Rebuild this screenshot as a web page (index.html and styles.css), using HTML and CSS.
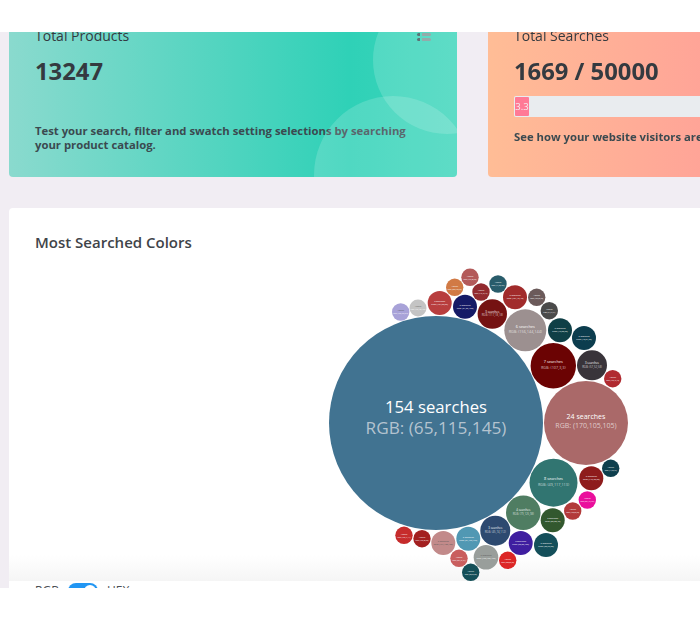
FILE: index.html
```html
<!DOCTYPE html>
<html lang="en">
<head>
<meta charset="utf-8">
<title>Dashboard</title>
<link rel="stylesheet" href="styles.css">
</head>
<body>
<header class="topbar"></header>
<main class="viewport">
  <div class="content">
    <section class="stats">
      <article class="stat stat-green">
        <h3 class="stat-label">Total Products</h3>
        <p class="stat-value">13247</p>
        <p class="stat-note stat-note-green">Test your search, filter and swatch setting selections by searching your product catalog.</p>
        <span class="stat-menu"><i></i><i></i></span>
        <span class="deco deco-a"></span>
        <span class="deco deco-b"></span>
      </article>
      <article class="stat stat-orange">
        <h3 class="stat-label">Total Searches</h3>
        <p class="stat-value">1669 / 50000</p>
        <div class="progress"><div class="progress-bar">3.3</div></div>
        <p class="stat-note nowrap">See how your website visitors are using your search</p>
      </article>
    </section>
    <section class="panel">
      <h2 class="panel-title">Most Searched Colors</h2>
      <div class="fade"></div>
      <svg class="bubbles" width="691" height="360" viewBox="0 0 691 360">
        <g transform="translate(-9,-266)">
          <g class="b"><circle cx="436" cy="423" r="107" fill="#417391"/><text class="t1" x="436" y="413">154 searches</text><text class="t2" x="436" y="434">RGB: (65,115,145)</text></g>
          <g class="b"><circle cx="586" cy="423" r="42" fill="#aa6969"/><text class="t3" x="586" y="419">24 searches</text><text class="t4" x="586" y="428">RGB: (170,105,105)</text></g>
          <g class="b"><circle cx="553.3" cy="365.7" r="22.7" fill="#6b0303"/><text class="t5" x="553.3" y="363">7 searches</text><text class="t6" x="553.3" y="369">RGB: (107,3,3)</text></g>
          <g class="b"><circle cx="553.5" cy="482.7" r="24" fill="#317571"/><text class="t5" x="553.5" y="480">8 searches</text><text class="t6" x="553.5" y="486">RGB: (49,117,113)</text></g>
          <g class="b"><circle cx="525.3" cy="330.3" r="21" fill="#9c9090"/><text class="t5" x="525.3" y="328">6 searches</text><text class="t6" x="525.3" y="333">RGB: (156,144,144)</text></g>
          <g class="b"><circle cx="523.3" cy="512.7" r="17.3" fill="#4f7d62"/><text class="t7" x="523.3" y="511">4 searches</text><text class="t8" x="523.3" y="515">RGB: (79,125,98)</text></g>
          <g class="b"><circle cx="495.3" cy="530.7" r="15" fill="#2d4a70"/><text class="t7" x="495.3" y="529">3 searches</text><text class="t8" x="495.3" y="533">RGB: (45,74,112)</text></g>
          <g class="b"><circle cx="592" cy="365.3" r="15" fill="#39343a"/><text class="t7" x="592" y="364">3 searches</text><text class="t8" x="592" y="368">RGB: (57,52,58)</text></g>
          <g class="b"><circle cx="492.3" cy="314" r="14.7" fill="#751212"/><text class="t7" x="492.3" y="313">3 searches</text><text class="t8" x="492.3" y="316">RGB: (117,18,18)</text></g>
          <g class="b"><circle cx="439.7" cy="303" r="12" fill="#b83e3e"/><text class="t9" x="439.7" y="302">2 searches</text><text class="t9" x="439.7" y="305">RGB: (184,62,62)</text></g>
          <g class="b"><circle cx="465" cy="306.7" r="12" fill="#151a66"/><text class="t9" x="465" y="306">2 searches</text><text class="t9" x="465" y="309">RGB: (21,26,102)</text></g>
          <g class="b"><circle cx="515" cy="297.3" r="12" fill="#a12b2b"/><text class="t9" x="515" y="296">2 searches</text><text class="t9" x="515" y="299">RGB: (161,43,43)</text></g>
          <g class="b"><circle cx="560" cy="330.3" r="12" fill="#0f3f46"/><text class="t9" x="560" y="329">2 searches</text><text class="t9" x="560" y="332">RGB: (15,63,70)</text></g>
          <g class="b"><circle cx="584" cy="338" r="12" fill="#0c3d4e"/><text class="t9" x="584" y="337">2 searches</text><text class="t9" x="584" y="340">RGB: (12,61,78)</text></g>
          <g class="b"><circle cx="591.3" cy="478.3" r="12" fill="#8e1c1c"/><text class="t9" x="591.3" y="477">2 searches</text><text class="t9" x="591.3" y="480">RGB: (142,28,28)</text></g>
          <g class="b"><circle cx="552.7" cy="520.3" r="12" fill="#32582e"/><text class="t9" x="552.7" y="519">2 searches</text><text class="t9" x="552.7" y="522">RGB: (50,88,46)</text></g>
          <g class="b"><circle cx="520.7" cy="543" r="12" fill="#3f1ea0"/><text class="t9" x="520.7" y="542">2 searches</text><text class="t9" x="520.7" y="545">RGB: (63,30,160)</text></g>
          <g class="b"><circle cx="546" cy="545" r="12" fill="#144f5a"/><text class="t9" x="546" y="544">2 searches</text><text class="t9" x="546" y="547">RGB: (20,79,90)</text></g>
          <g class="b"><circle cx="468.3" cy="538.7" r="12" fill="#5198b3"/><text class="t9" x="468.3" y="538">2 searches</text><text class="t9" x="468.3" y="541">RGB: (81,152,179)</text></g>
          <g class="b"><circle cx="443.3" cy="543" r="12" fill="#c28a8a"/><text class="t9 dk" x="443.3" y="542">2 searches</text><text class="t9 dk" x="443.3" y="545">RGB: (194,138,138)</text></g>
          <g class="b"><circle cx="486" cy="557.3" r="12.3" fill="#999e9b"/><text class="t9 dk" x="486" y="556">2 searches</text><text class="t9" x="486" y="559">RGB: (153,158,155)</text></g>
          <g class="b"><circle cx="400.7" cy="312" r="8.7" fill="#a8a2d8"/><text class="t10 dk" x="400.7" y="311">1 search</text><text class="t10" x="400.7" y="314">RGB: (168,162,216)</text></g>
          <g class="b"><circle cx="418" cy="308" r="8.5" fill="#c4c4c4"/><text class="t10 dk" x="418" y="307">1 search</text><text class="t10" x="418" y="310">RGB: (196,196,196)</text></g>
          <g class="b"><circle cx="454.7" cy="287.3" r="8.7" fill="#d17a45"/><text class="t10" x="454.7" y="287">1 search</text><text class="t10" x="454.7" y="290">RGB: (209,122,69)</text></g>
          <g class="b"><circle cx="470" cy="277.3" r="8.7" fill="#b35a5a"/><text class="t10" x="470" y="277">1 search</text><text class="t10" x="470" y="280">RGB: (179,90,90)</text></g>
          <g class="b"><circle cx="481" cy="292" r="8.7" fill="#922a2f"/><text class="t10" x="481" y="291">1 search</text><text class="t10" x="481" y="294">RGB: (146,42,47)</text></g>
          <g class="b"><circle cx="498" cy="284" r="8.7" fill="#295c6b"/><text class="t10" x="498" y="283">1 search</text><text class="t10" x="498" y="286">RGB: (41,92,107)</text></g>
          <g class="b"><circle cx="536.7" cy="297.3" r="8.7" fill="#6b5a5a"/><text class="t10" x="536.7" y="296">1 search</text><text class="t10" x="536.7" y="299">RGB: (107,90,90)</text></g>
          <g class="b"><circle cx="549.3" cy="310.7" r="8.7" fill="#4a4a4a"/><text class="t10" x="549.3" y="310">1 search</text><text class="t10" x="549.3" y="313">RGB: (74,74,74)</text></g>
          <g class="b"><circle cx="612.7" cy="378.7" r="8.7" fill="#b02a30"/><text class="t10" x="612.7" y="378">1 search</text><text class="t10" x="612.7" y="381">RGB: (176,42,48)</text></g>
          <g class="b"><circle cx="610.7" cy="468.3" r="8.7" fill="#0e3f4d"/><text class="t10" x="610.7" y="468">1 search</text><text class="t10" x="610.7" y="471">RGB: (14,63,77)</text></g>
          <g class="b"><circle cx="587.3" cy="500" r="8.7" fill="#ea0f9c"/><text class="t10" x="587.3" y="499">1 search</text><text class="t10" x="587.3" y="502">RGB: (234,15,156)</text></g>
          <g class="b"><circle cx="572.7" cy="511" r="8.7" fill="#b23a3a"/><text class="t10" x="572.7" y="510">1 search</text><text class="t10" x="572.7" y="513">RGB: (178,58,58)</text></g>
          <g class="b"><circle cx="404" cy="535.3" r="8.7" fill="#c62c2c"/><text class="t10" x="404" y="535">1 search</text><text class="t10" x="404" y="538">RGB: (198,44,44)</text></g>
          <g class="b"><circle cx="422" cy="538.7" r="8.7" fill="#a32020"/><text class="t10" x="422" y="538">1 search</text><text class="t10" x="422" y="541">RGB: (163,32,32)</text></g>
          <g class="b"><circle cx="459" cy="558.3" r="8.7" fill="#c95e5e"/><text class="t10" x="459" y="558">1 search</text><text class="t10" x="459" y="561">RGB: (201,94,94)</text></g>
          <g class="b"><circle cx="507.7" cy="560.3" r="8.7" fill="#dc2626"/><text class="t10" x="507.7" y="560">1 search</text><text class="t10" x="507.7" y="563">RGB: (220,38,38)</text></g>
          <g class="b"><circle cx="470.7" cy="572.3" r="8.7" fill="#144f58"/><text class="t10" x="470.7" y="572">1 search</text><text class="t10" x="470.7" y="575">RGB: (20,79,88)</text></g>
        </g>
      </svg>
      <div class="format">
        <span>RGB</span>
        <span class="switch"><span class="knob"></span></span>
        <span>HEX</span>
      </div>
    </section>
  </div>
</main>
</body>
</html>
```

FILE: styles.css
```css
* { box-sizing: border-box; }
html, body { margin: 0; height: 620px; overflow: hidden; background: #fff; }
body { font-family: "Open Sans", "Noto Sans", "Liberation Sans", sans-serif; color: #343a40; }

.topbar { height: 32px; background: #fff; }

.viewport {
  position: relative;
  height: 556px;
  overflow: hidden;
  background: #f1edf3;
}
.content { margin-top: -17px; padding-left: 9px; width: 760px; filter: blur(0.5px); }

.stats { display: grid; grid-template-columns: 448px 300px; column-gap: 31px; }

.stat {
  position: relative;
  height: 162px;
  padding: 11px 26px 0;
  border-radius: 4px;
  overflow: hidden;
}
.stat-green { background: linear-gradient(90deg, #8adace 0%, #2fd1b7 76%, #3fd6bb 100%); }
.stat-orange { background: linear-gradient(90deg, #ffbd96 0%, #ff9a98 100%); }

.stat-label { margin: 0; font-size: 14px; line-height: 20px; font-weight: 400; }
.stat-value { margin: 10px 0 0; font-size: 23.8px; line-height: 30px; font-weight: 700; }
.stat-note { margin: 0; font-size: 11.3px; line-height: 14px; font-weight: 700; color: #3b4a50; }
.stat-note-green { margin-top: 38px; width: 380px; }
.nowrap { white-space: nowrap; }

.stat-menu {
  position: absolute;
  left: 408px;
  top: 18px;
  display: grid;
  gap: 2px;
}
.stat-menu i { display: block; width: 14px; height: 3px; border-radius: 2px;
  background: linear-gradient(90deg, #3d5a5c 0 3px, transparent 3px 5px, #7f9b9a 5px 100%); }

.deco { position: absolute; border-radius: 50%; background: rgba(255, 255, 255, 0.16); }
.deco-a { left: 364px; top: -29px; width: 148px; height: 148px; }
.deco-b { left: 305px; top: 81px; width: 158px; height: 158px; }

.progress { margin-top: 10px; height: 21px; padding: 1px; border-radius: 2px; background: #e9ecef; width: 260px; }
.progress-bar { width: 14px; height: 19px; background: #ff7a96; color: #f6eef0; font-size: 9.5px; line-height: 19px; text-align: center; border-radius: 1px; }
.stat-orange .stat-note { margin-top: 13px; }

.panel {
  margin-top: 31px;
  width: 760px;
  height: 420px;
  padding: 24px 26px 0;
  background: #fff;
  border-radius: 4px;
  position: relative;
}
.panel-title { margin: 0; font-size: 15px; line-height: 21px; font-weight: 600; color: #3f4449; }

.bubbles { position: absolute; left: 0; top: 58px; }
.b text { font-family: "Open Sans", "Noto Sans", sans-serif; text-anchor: middle; fill: #fff; }
.t1 { font-size: 16.7px; }
.t2 { font-size: 17.2px; }
.b .t2 { fill: #d3dae0; fill-opacity: 0.8; }
.t3 { font-size: 7px; }
.t4 { font-size: 7px; fill-opacity: 0.65; }
.t5 { font-size: 3.8px; }
.t6 { font-size: 3.8px; fill-opacity: 0.7; }
.t7 { font-size: 2.8px; }
.t8 { font-size: 2.8px; fill-opacity: 0.7; }
.t9 { font-size: 2.2px; }
.t10 { font-size: 1.7px; }
.b .dk { fill: #555; }

.format {
  position: absolute;
  left: 26px;
  top: 375px;
  display: flex;
  align-items: center;
  gap: 9px;
  font-size: 12px;
  line-height: 16px;
  color: #4b4f55;
}
.switch { position: relative; width: 30px; height: 16px; border-radius: 8px; background: #2196f3; }
.knob { position: absolute; right: 2px; top: 2px; width: 12px; height: 12px; border-radius: 50%; background: #fff; }

.fade {
  position: absolute;
  left: 0;
  right: 0;
  top: 347px;
  height: 26px;
  background: linear-gradient(180deg, rgba(244, 244, 244, 0), rgba(244, 244, 244, 0.9));
}
```
